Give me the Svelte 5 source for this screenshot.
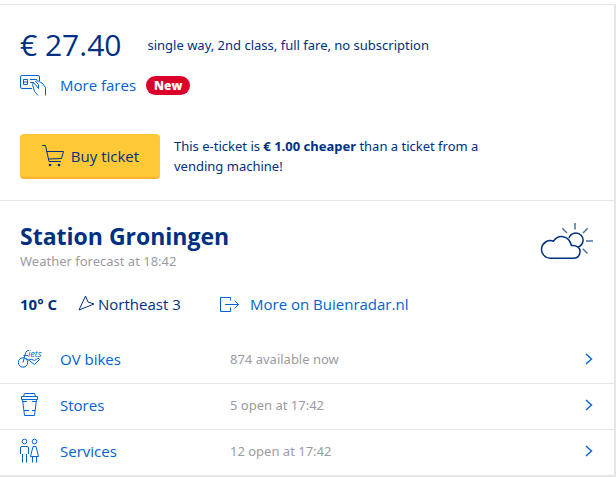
<script>
  const facilities = [
    { name: 'OV bikes', status: '874 available now', icon: 'bike' },
    { name: 'Stores', status: '5 open at 17:42', icon: 'cup' },
    { name: 'Services', status: '12 open at 17:42', icon: 'people' }
  ];
</script>

<main>
  <section class="fare">
    <div class="price-row">
      <span class="price">€ 27.40</span>
      <span class="conditions">single way, 2nd class, full fare, no subscription</span>
    </div>
    <div class="more">
      <a class="fares" href="#fares">
        <svg width="28" height="24" viewBox="0 0 28 24" aria-hidden="true">
          <path d="M12 15.500H2Q0.500 15.500 0.500 14V4Q0.500 2.500 2 2.500H18Q19.500 2.500 19.500 4V8M3.500 6.500H7.500V11.500H3.500ZM4 9H7M10 6.500H17M10 9.500H14M18 22.500L14.500 18.500L12.500 11.500Q12.500 9.500 14.500 10.500L18.500 15.500V11.500L15.500 8.500Q16 7.500 18 8L22 10L25.500 14.500V22.500" />
        </svg>
        <span>More fares</span>
      </a>
      <span class="badge">New</span>
    </div>
    <div class="buy-row">
      <button type="button">
        <svg width="24" height="24" viewBox="0 0 24 24" aria-hidden="true">
          <path d="M1 1.500H4.500L8 17.500H20M5.500 7.500H22.500L20.500 14.500L7.500 15" />
          <circle cx="9" cy="21" r="1.300" class="dot" />
          <circle cx="18" cy="21" r="1.300" class="dot" />
        </svg>
        <span>Buy ticket</span>
      </button>
      <p>This e-ticket is <strong>€ 1.00 cheaper</strong> than a ticket from a vending machine!</p>
    </div>
  </section>

  <section class="station">
    <header>
      <div>
        <h2>Station Groningen</h2>
        <p>Weather forecast at 18:42</p>
      </div>
      <svg class="weather" width="54" height="40" viewBox="0 0 54 40" role="img" aria-label="Partly cloudy">
        <path d="M10.500 37.200A8.800 8.800 0 1 1 13.500 20.200C18 13.500 28.500 13.500 31.500 24.500C37 24 40.500 27 40 31C39.600 35 37 37.200 33.500 37.200ZM29 17A7.200 7.200 0 1 1 37.500 26.200" />
        <path class="rays" d="M35 2V8.500M22.300 7.300L27 12M47.700 7.300L43 12M46 20H53M42.800 27.800L47.500 32.500" />
      </svg>
    </header>

    <div class="forecast">
      <strong>10° C</strong>
      <span class="wind">
        <svg width="18" height="18" viewBox="0 0 18 18" aria-hidden="true">
          <path d="M2 15L8.500 1L11 7L17 9Z" />
        </svg>
        <span>Northeast 3</span>
      </span>
      <a href="#buienradar">
        <svg width="20" height="16" viewBox="0 0 20 16" aria-hidden="true">
          <path d="M10.500 4.500V1.500H0.500V15.500H10.500V11.500M5 8.500H18.500M14.500 4.500L18.500 8.500L14.500 12.500" />
        </svg>
        <span>More on Buienradar.nl</span>
      </a>
    </div>

    <ul>
      {#each facilities as item}
        <li>
          <a href="#{item.icon}">
            {#if item.icon === 'bike'}
              <svg width="26" height="24" viewBox="0 0 26 24" aria-hidden="true">
                <circle cx="5" cy="15.500" r="4.700" />
                <path d="M5 15.500L7.500 6Q8.500 3 11 3.500M5.500 8.500H10M8 11.500L10.500 13L16.500 17.500L21.500 12.500Q21.500 11 19.500 11.500L16.500 13.500Q14 11.500 10.500 13" />
                <text x="10" y="10">iets</text>
              </svg>
            {:else if item.icon === 'cup'}
              <svg width="26" height="26" viewBox="0 0 26 26" aria-hidden="true">
                <path d="M5.500 4.500L6.500 1.500H16.500L17.500 4.500M3.500 4.500H19.500V7.500H3.500ZM4.500 7.500L6.500 23.500H16.500L18.500 7.500M5 9.500H9M14 9.500H18M6 18.500H11M14 18.500H17" />
              </svg>
            {:else}
              <svg width="26" height="26" viewBox="0 0 26 26" aria-hidden="true">
                <circle cx="6.500" cy="3.500" r="2.300" />
                <circle cx="16.500" cy="3.500" r="2.300" />
                <path d="M2.500 16V10Q2.500 8.500 4 8.500H9Q10.500 8.500 10.500 10V16M4.500 16V24.500M8.500 16V24.500M15 8.500H18L20.500 18.500H12.500L15 8.500M14.500 18.500V24.500M18.500 18.500V24.500" />
              </svg>
            {/if}
            <span class="name">{item.name}</span>
            <span class="status">{item.status}</span>
            <svg class="chevron" width="10" height="12" viewBox="0 0 10 12" aria-hidden="true">
              <path d="M2 1L7.500 6L2 11" />
            </svg>
          </a>
        </li>
      {/each}
    </ul>
  </section>
</main>

<style>
  :global(body) {
    background: #fff;
  }
  main {
    box-sizing: border-box;
    margin-top: 4px;
    border: solid #e5e5e6;
    border-width: 1px 2px 2px 0;
    color: #003082;
    font: 15px/20px "Open Sans", "Noto Sans", sans-serif;
  }
  svg {
    flex: none;
    fill: none;
    stroke: currentColor;
    stroke-width: 1;
  }
  a {
    color: #0063d3;
    text-decoration: none;
  }
  p, h2, ul {
    margin: 0;
    padding: 0;
  }
  .conditions, .buy-row p, header p, .status {
    font-family: "Noto Sans", "Open Sans", sans-serif;
    font-size: 13px;
  }
  .fare {
    padding: 20px 20px 21px;
    border-bottom: 1px solid #e5e5e6;
  }
  .price-row {
    display: flex;
    align-items: center;
    gap: 26px;
    height: 40px;
  }
  .price {
    font-size: 30px;
    line-height: 40px;
  }
  .more, .fares {
    display: flex;
    align-items: center;
  }
  .more {
    gap: 10px;
    height: 40px;
  }
  .fares {
    gap: 12px;
  }
  .badge {
    padding: 0 8px;
    border-radius: 10px;
    background: #db0029;
    color: #fff;
    font-size: 12px;
    font-weight: 800;
    line-height: 19px;
  }
  .buy-row {
    display: flex;
    align-items: flex-start;
    gap: 14px;
    margin-top: 29px;
  }
  .buy-row p {
    max-width: 330px;
    padding-top: 2px;
  }
  button {
    display: flex;
    flex: none;
    align-items: center;
    justify-content: center;
    gap: 6px;
    width: 140px;
    height: 45px;
    padding: 0;
    border: 0;
    border-bottom: 2px solid #ffb12e;
    border-radius: 4px;
    background: #ffc837;
    color: inherit;
    font: inherit;
  }
  .dot {
    fill: currentColor;
    stroke: none;
  }
  header {
    display: flex;
    justify-content: space-between;
    padding: 20px 20px 0;
  }
  h2 {
    font-size: 23px;
    line-height: 30px;
  }
  .weather {
    stroke-width: 1.5;
  }
  .rays {
    stroke: #4b70aa;
  }
  header p, .status {
    color: #9a9ba3;
  }
  .forecast {
    display: flex;
    align-items: center;
    height: 32px;
    padding: 17px 20px;
  }
  .forecast strong {
    width: 57px;
  }
  .wind {
    display: flex;
    align-items: center;
    gap: 3px;
    width: 143px;
  }
  .forecast a {
    display: flex;
    align-items: center;
    gap: 10px;
  }
  ul {
    padding-top: 1px;
    list-style: none;
  }
  li + li {
    border-top: 1px solid #e5e5e6;
  }
  li a {
    box-sizing: border-box;
    display: grid;
    grid-template-columns: 42px 170px 1fr 10px;
    align-items: center;
    height: 45px;
    padding: 0 20px 3px 18px;
  }
  .chevron {
    stroke-width: 1.4;
  }
  text {
    fill: currentColor;
    stroke: none;
    font: italic 9px "Open Sans", sans-serif;
  }
</style>
